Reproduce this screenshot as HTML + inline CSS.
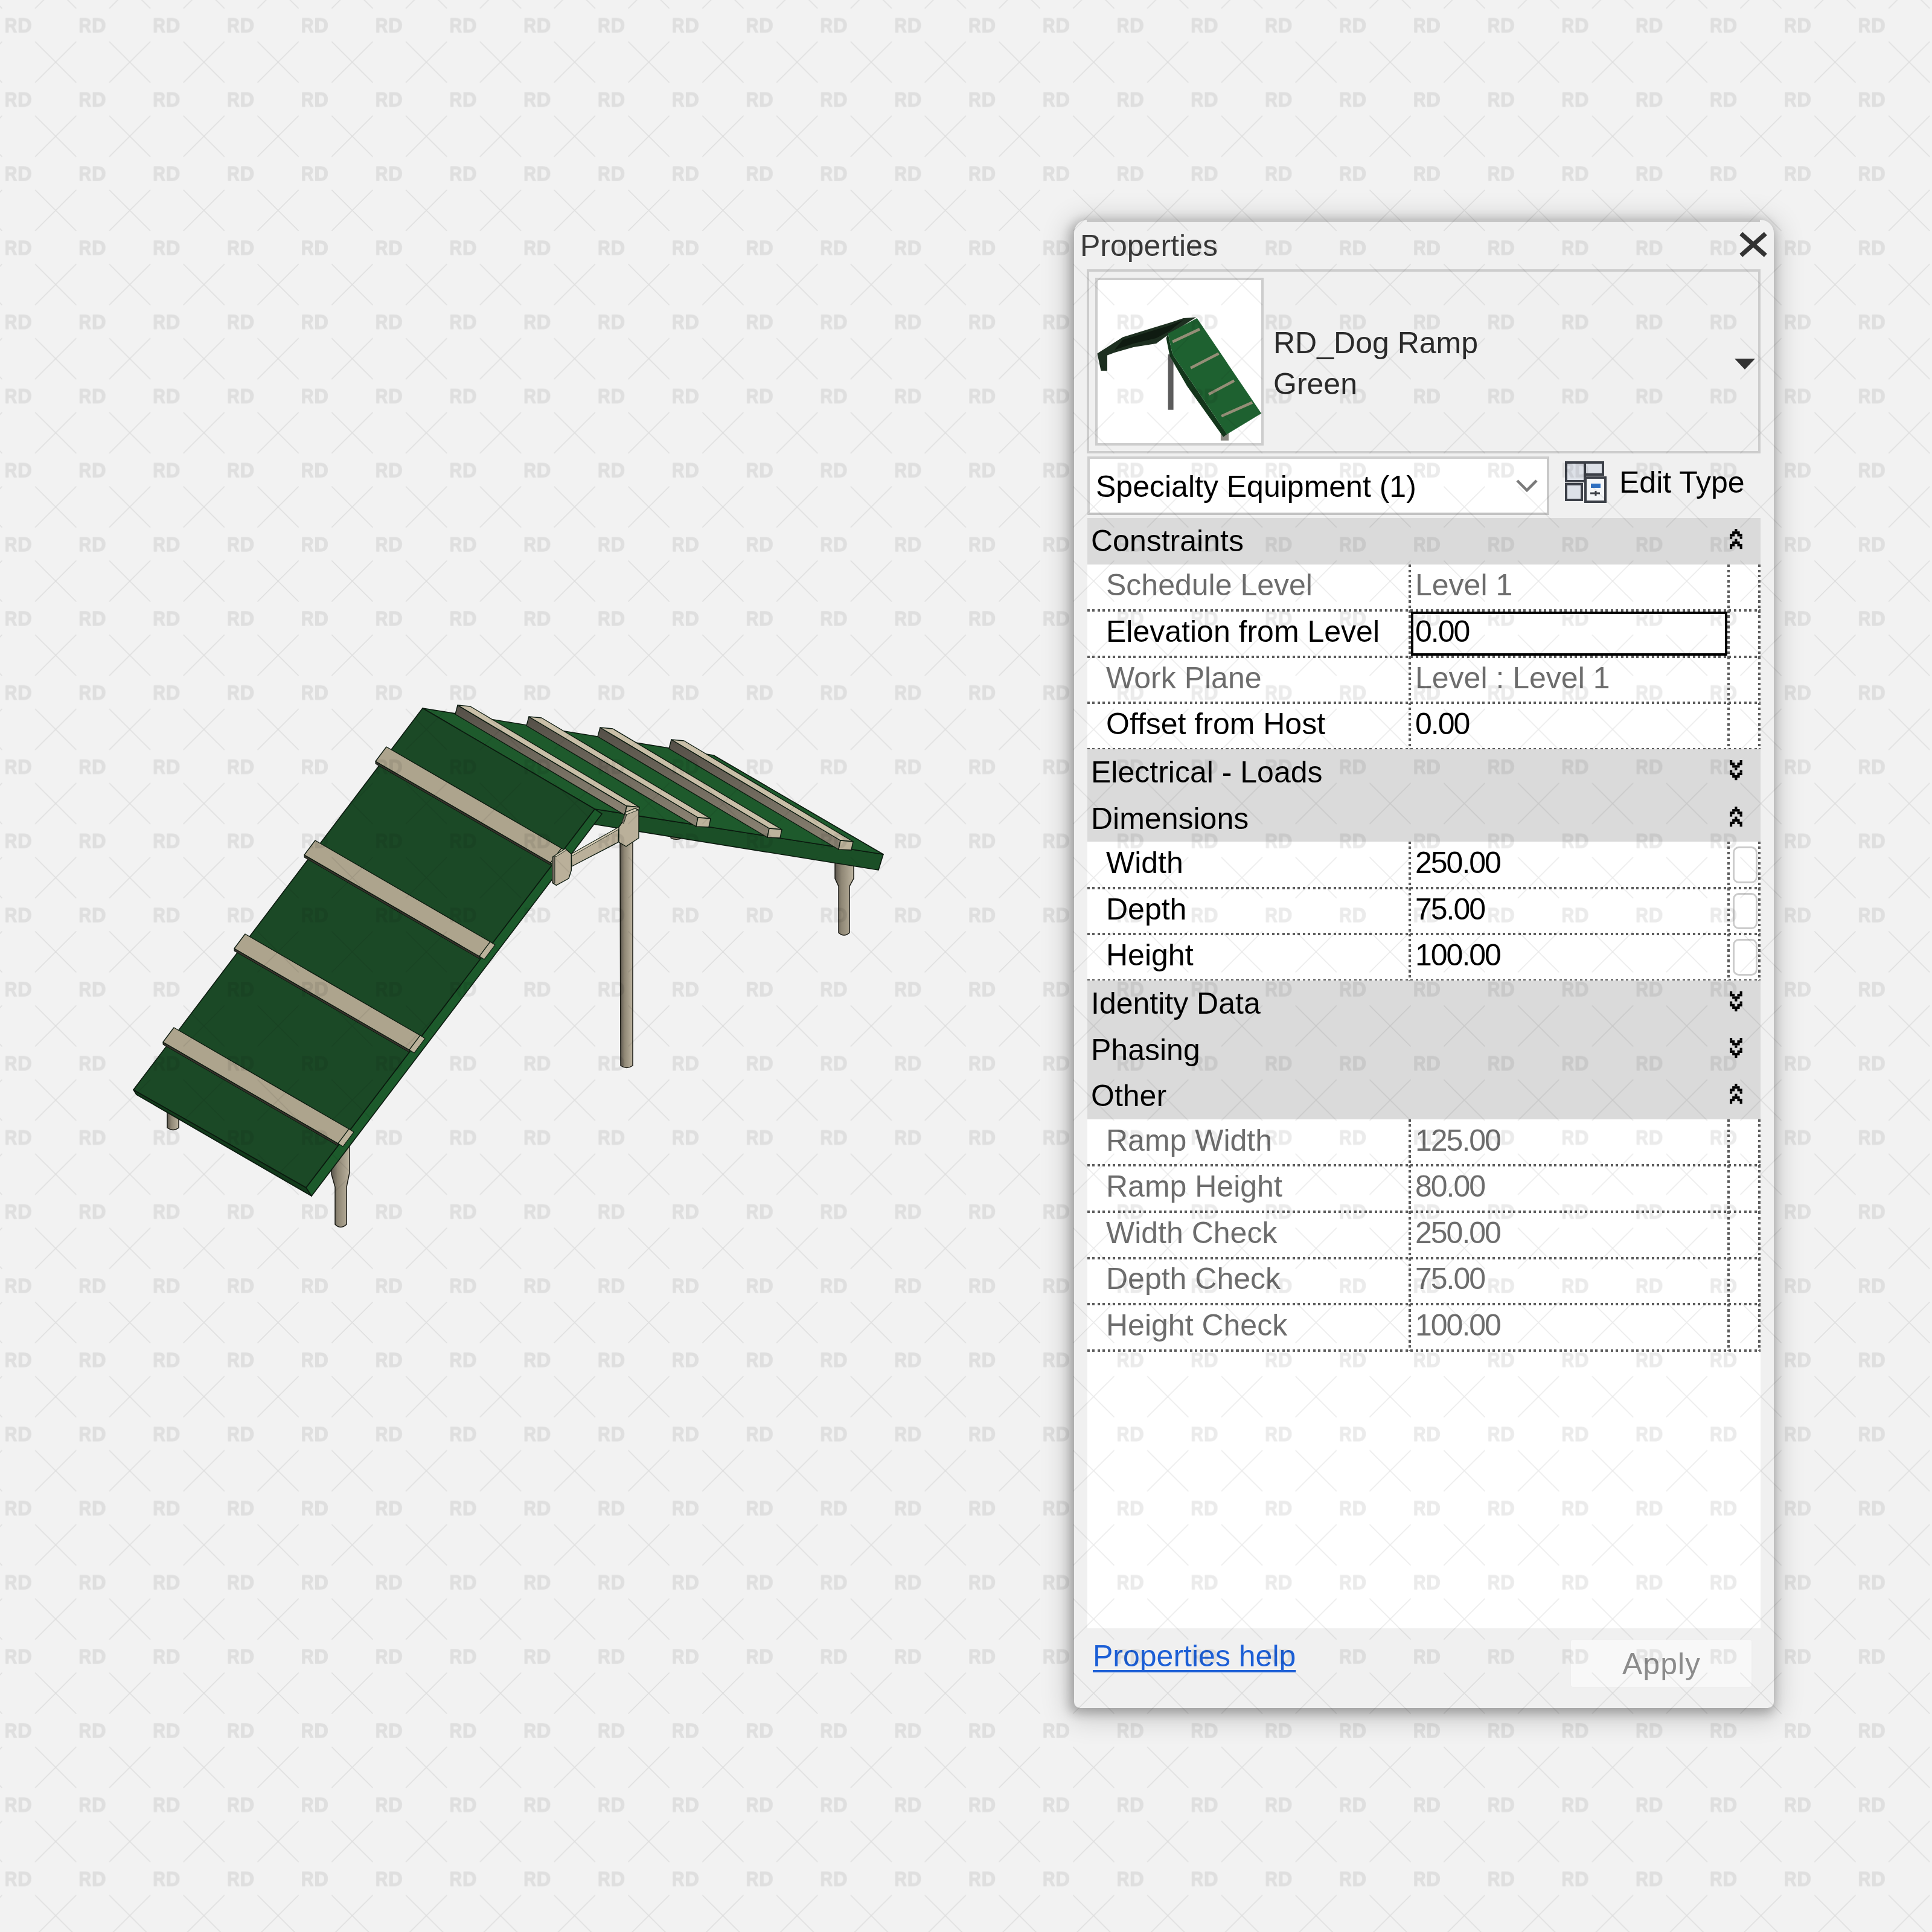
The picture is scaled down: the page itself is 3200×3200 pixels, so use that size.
<!DOCTYPE html>
<html><head><meta charset="utf-8">
<style>
html,body{margin:0;padding:0;}
body{width:3200px;height:3200px;position:relative;overflow:hidden;background:#f2f2f2;font-family:"Liberation Sans",sans-serif;}
.a{position:absolute;}
.t{position:absolute;white-space:nowrap;font-size:50px;line-height:50px;color:#000;}
.g{color:#6d6d6d;}
.hdr{position:absolute;left:1801px;width:1115px;background:#dadada;}
.hl{position:absolute;left:1801px;width:1115px;height:4px;background:repeating-linear-gradient(90deg,#5c5c5c 0 4px,transparent 4px 8.5px);}
.vl{position:absolute;width:4px;background:repeating-linear-gradient(180deg,#5c5c5c 0 4px,transparent 4px 8.5px);}
</style></head>
<body>
<svg class="a" style="left:0;top:0" width="3200" height="3200" viewBox="0 0 3200 3200">
<defs>
<linearGradient id="post" x1="0" x2="1" y1="0" y2="0"><stop offset="0" stop-color="#5a554c"/><stop offset="0.35" stop-color="#8f8775"/><stop offset="1" stop-color="#bcb39f"/></linearGradient>
<linearGradient id="sside" x1="0" x2="0" y1="0" y2="1"><stop offset="0" stop-color="#544f47"/><stop offset="1" stop-color="#8c8474"/></linearGradient>
</defs>
<path d="M1383 1425 L1414 1425 L1414 1455 L1407 1468 L1407 1545 Q1398 1553 1389 1545 L1389 1468 L1383 1455 Z" fill="url(#post)" stroke="#1a1a14" stroke-width="1.5"/>
<path d="M1111 1380 L1130 1380 L1130 1388 Q1120 1393 1111 1388 Z" fill="url(#post)" stroke="#1a1a14" stroke-width="1.2"/>
<path d="M1027 1392 L1048 1392 L1048 1765 Q1038 1772 1028 1765 Z" fill="url(#post)" stroke="#1a1a14" stroke-width="1.5"/>
<path d="M277 1830 L296 1830 L296 1868 Q287 1875 277 1868 Z" fill="url(#post)" stroke="#1a1a14" stroke-width="1.5"/>
<path d="M549 1890 L579 1890 L579 1942 L574 1966 L574 2028 Q564 2037 555 2028 L555 1966 L549 1945 Z" fill="url(#post)" stroke="#1a1a14" stroke-width="1.5"/>
<polygon points="985.0,1340.0 1463.0,1415.0 1455.0,1441.0 976.0,1364.0 994.0,1351.0" fill="#1b4f27" stroke="#0b1a0f" stroke-width="1.6" stroke-linejoin="round" />
<polygon points="700.0,1173.0 1182.0,1251.0 1463.0,1415.0 985.0,1340.0" fill="#1e5a2c" stroke="#0b1a0f" stroke-width="1.6" stroke-linejoin="round" />
<polygon points="758.0,1168.0 1038.0,1335.0 1035.0,1350.0 754.0,1183.0" fill="url(#sside)" stroke="#0b1a0f" stroke-width="1.4" stroke-linejoin="round" />
<polygon points="758.0,1168.0 779.0,1170.0 1059.0,1337.0 1038.0,1335.0" fill="#c9bfa8" stroke="#0b1a0f" stroke-width="1.4" stroke-linejoin="round" />
<polygon points="1038.0,1335.0 1059.0,1337.0 1056.0,1351.0 1035.0,1350.0" fill="#bdb39c" stroke="#0b1a0f" stroke-width="1.4" stroke-linejoin="round" />
<polygon points="876.0,1187.0 1156.0,1354.0 1153.0,1369.0 872.0,1202.0" fill="url(#sside)" stroke="#0b1a0f" stroke-width="1.4" stroke-linejoin="round" />
<polygon points="876.0,1187.0 897.0,1189.0 1177.0,1356.0 1156.0,1354.0" fill="#c9bfa8" stroke="#0b1a0f" stroke-width="1.4" stroke-linejoin="round" />
<polygon points="1156.0,1354.0 1177.0,1356.0 1174.0,1370.0 1153.0,1369.0" fill="#bdb39c" stroke="#0b1a0f" stroke-width="1.4" stroke-linejoin="round" />
<polygon points="994.0,1205.0 1274.0,1372.0 1271.0,1387.0 990.0,1220.0" fill="url(#sside)" stroke="#0b1a0f" stroke-width="1.4" stroke-linejoin="round" />
<polygon points="994.0,1205.0 1015.0,1207.0 1295.0,1374.0 1274.0,1372.0" fill="#c9bfa8" stroke="#0b1a0f" stroke-width="1.4" stroke-linejoin="round" />
<polygon points="1274.0,1372.0 1295.0,1374.0 1292.0,1388.0 1271.0,1387.0" fill="#bdb39c" stroke="#0b1a0f" stroke-width="1.4" stroke-linejoin="round" />
<polygon points="1112.0,1225.0 1392.0,1392.0 1389.0,1407.0 1108.0,1240.0" fill="url(#sside)" stroke="#0b1a0f" stroke-width="1.4" stroke-linejoin="round" />
<polygon points="1112.0,1225.0 1133.0,1227.0 1413.0,1394.0 1392.0,1392.0" fill="#c9bfa8" stroke="#0b1a0f" stroke-width="1.4" stroke-linejoin="round" />
<polygon points="1392.0,1392.0 1413.0,1394.0 1410.0,1408.0 1389.0,1407.0" fill="#bdb39c" stroke="#0b1a0f" stroke-width="1.4" stroke-linejoin="round" />
<polygon points="221.0,1805.0 507.0,1967.0 516.0,1981.0 226.0,1813.0" fill="#123a1b" stroke="#0b1a0f" stroke-width="1.6" stroke-linejoin="round" />
<polygon points="985.0,1340.0 997.0,1348.0 516.0,1981.0 507.0,1967.0" fill="#1c5a2b" stroke="#0b1a0f" stroke-width="1.6" stroke-linejoin="round" />
<polygon points="700.0,1173.0 985.0,1340.0 507.0,1967.0 221.0,1805.0" fill="#1b4926" stroke="#0b1a0f" stroke-width="1.6" stroke-linejoin="round" />
<polygon points="622.0,1261.0 912.0,1429.0 912.0,1433.0 622.0,1265.0" fill="#35312b" stroke="#0b1a0f" stroke-width="1.0" stroke-linejoin="round" />
<polygon points="640.0,1237.0 930.0,1405.0 912.0,1429.0 622.0,1261.0" fill="#ada48d" stroke="#0b1a0f" stroke-width="1.4" stroke-linejoin="round" />
<polygon points="930.0,1405.0 938.0,1410.0 920.0,1434.0 912.0,1429.0" fill="#bcb39c" stroke="#0b1a0f" stroke-width="1.2" stroke-linejoin="round" />
<polygon points="504.0,1416.0 794.0,1584.0 794.0,1588.0 504.0,1420.0" fill="#35312b" stroke="#0b1a0f" stroke-width="1.0" stroke-linejoin="round" />
<polygon points="522.0,1392.0 812.0,1560.0 794.0,1584.0 504.0,1416.0" fill="#ada48d" stroke="#0b1a0f" stroke-width="1.4" stroke-linejoin="round" />
<polygon points="812.0,1560.0 820.0,1565.0 802.0,1589.0 794.0,1584.0" fill="#bcb39c" stroke="#0b1a0f" stroke-width="1.2" stroke-linejoin="round" />
<polygon points="388.0,1571.0 678.0,1739.0 678.0,1743.0 388.0,1575.0" fill="#35312b" stroke="#0b1a0f" stroke-width="1.0" stroke-linejoin="round" />
<polygon points="406.0,1547.0 696.0,1715.0 678.0,1739.0 388.0,1571.0" fill="#ada48d" stroke="#0b1a0f" stroke-width="1.4" stroke-linejoin="round" />
<polygon points="696.0,1715.0 704.0,1720.0 686.0,1744.0 678.0,1739.0" fill="#bcb39c" stroke="#0b1a0f" stroke-width="1.2" stroke-linejoin="round" />
<polygon points="270.0,1726.0 560.0,1894.0 560.0,1898.0 270.0,1730.0" fill="#35312b" stroke="#0b1a0f" stroke-width="1.0" stroke-linejoin="round" />
<polygon points="288.0,1702.0 578.0,1870.0 560.0,1894.0 270.0,1726.0" fill="#ada48d" stroke="#0b1a0f" stroke-width="1.4" stroke-linejoin="round" />
<polygon points="578.0,1870.0 586.0,1875.0 568.0,1899.0 560.0,1894.0" fill="#bcb39c" stroke="#0b1a0f" stroke-width="1.2" stroke-linejoin="round" />
<polygon points="946.0,1414.6 1025.0,1370.0 1024.0,1395.0 947.0,1435.0" fill="#bab09a" stroke="#0b1a0f" stroke-width="1.4" stroke-linejoin="round" />
<polygon points="946.0,1414.6 1025.0,1370.0 1026.0,1373.0 947.0,1418.0" fill="#d6ccb6" stroke="#0b1a0f" stroke-width="0.8" stroke-linejoin="round" />
<polygon points="914.7,1419.8 936.4,1405.8 946.3,1414.6 946.3,1441.5 942.0,1455.0 921.4,1466.3 914.7,1462.2" fill="#bab09a" stroke="#0b1a0f" stroke-width="1.4" stroke-linejoin="round" />
<polygon points="914.7,1419.8 919.0,1417.0 919.0,1463.0 914.7,1462.2" fill="#6f695d" stroke="#0b1a0f" stroke-width="0.8" stroke-linejoin="round" />
<polygon points="919.0,1417.0 936.4,1405.8 938.0,1408.0 921.0,1419.0" fill="#d6ccb6" stroke="#0b1a0f" stroke-width="0.8" stroke-linejoin="round" />
<polygon points="1035.0,1346.0 1052.0,1339.0 1058.0,1342.0 1058.0,1388.0 1037.0,1402.0 1025.0,1395.0 1025.0,1370.0 1032.0,1360.0" fill="#bab09a" stroke="#0b1a0f" stroke-width="1.4" stroke-linejoin="round" />
<polygon points="1030.0,1362.0 1035.0,1348.0 1038.0,1349.0 1033.0,1364.0" fill="#6f695d" stroke="#0b1a0f" stroke-width="0.8" stroke-linejoin="round" />
<polygon points="1035.0,1346.0 1052.0,1339.0 1056.0,1342.0 1038.0,1349.0" fill="#d6ccb6" stroke="#0b1a0f" stroke-width="0.8" stroke-linejoin="round" />
</svg>
<div class="a" style="left:1779px;top:364px;width:1159px;height:2465px;background:#f0f0f0;border-radius:22px 22px 10px 10px;box-shadow:-3px 5px 16px 5px rgba(0,0,0,0.21),-2px 8px 46px 8px rgba(0,0,0,0.19);"></div>
<div class="a" style="left:1800px;top:364px;width:1115px;height:4px;background:#c6c6c6;"></div>
<div class="t " style="left:1789px;top:381.7px;color:#3a3a3a;">Properties</div>
<svg class="a" style="left:2878px;top:381px" width="52" height="48"><path d="M8.5 8.5 L43.5 39.5 M43.5 8.5 L8.5 39.5" stroke="#333" stroke-width="7.5" stroke-linecap="square"/></svg>
<div class="a" style="left:1800px;top:446px;width:1116px;height:305px;background:transparent;box-sizing:border-box;border:4px solid #cdcdcd;"></div>
<div class="a" style="left:1814px;top:460px;width:279px;height:278px;background:#fff;box-sizing:border-box;border:4px solid #cdcdcd;"></div>
<svg class="a" style="left:0;top:0" width="2100" height="760" viewBox="0 0 2100 760">
<polygon points="1817.5,585.6 1859.5,558.6 1903.1,545.1 1937.6,534.6 1960.1,527.1 1981.1,525.5 1960.1,539.1 1937.6,552.6 1915.1,569.1 1877.5,575.1 1846.0,584.1 1834.0,588.6 1834.0,614.1 1823.5,614.1 1819.0,593.1" fill="#1d2f20"/>
<polygon points="1859.5,563.1 1903.1,549.6 1937.6,539.1 1960.1,530.1 1937.6,548.1 1915.1,560.1 1877.5,569.1 1846.0,579.6" fill="#0f1b11"/>
<polygon points="1934.6,587.1 1943.6,587.1 1943.6,678.7 1934.6,678.7" fill="#5c5c5c"/>
<polygon points="2021.9,699.7 2035.0,699.7 2035.0,729.7 2021.9,729.7" fill="#8d8b84"/>
<polygon points="1934.6,552.6 1942.1,587.1 1975.1,635.1 2032.2,719.2 2026.2,723.7 1966.1,639.6 1937.6,590.1 1931.6,560.1" fill="#13361b"/>
<polygon points="1934.6,552.6 1982.6,527.1 2089.2,684.7 2032.2,719.2 1975.1,635.1 1942.1,587.1" fill="#1e6130"/>
<g stroke="#958e77" stroke-width="4.5">
<line x1="1942.1" y1="566.1" x2="1987.1" y2="545.1"/>
<line x1="1972.1" y1="609.6" x2="2018.6" y2="585.6"/>
<line x1="2002.1" y1="653.1" x2="2044.2" y2="630.6"/>
<line x1="2023.1" y1="689.2" x2="2074.2" y2="666.6"/>
</g></svg>
<div class="t " style="left:2109px;top:542.7px;color:#2a2a2a;">RD_Dog Ramp</div>
<div class="t " style="left:2109px;top:610.7px;color:#2a2a2a;">Green</div>
<svg class="a" style="left:2870px;top:592px" width="40" height="22"><path d="M3 2 L37 2 L20 20 Z" fill="#333"/></svg>
<div class="a" style="left:1801px;top:756px;width:765px;height:97px;background:#fff;box-sizing:border-box;border:4px solid #cfcfcf;border-bottom-color:#c2c2c2;border-right-color:#c8c8c8;"></div>
<div class="t " style="left:1815px;top:780.7px;">Specialty Equipment (1)</div>
<svg class="a" style="left:2508px;top:790px" width="42" height="30"><path d="M5 6 L21 22 L37 6" stroke="#7a7a7a" stroke-width="4.5" fill="none"/></svg>
<svg class="a" style="left:2592px;top:764px" width="70" height="70">
<rect x="2" y="2" width="31" height="31" fill="#dde1e8" stroke="#3c4048" stroke-width="4"/>
<rect x="33" y="2" width="30" height="20" fill="#dde1e8" stroke="#3c4048" stroke-width="4"/>
<rect x="2" y="38" width="26" height="26" fill="#dde1e8" stroke="#3c4048" stroke-width="4"/>
<rect x="34" y="27" width="33" height="40" fill="#f4f6f8" stroke="#3c4048" stroke-width="4"/>
<rect x="43" y="37" width="16" height="7" fill="#2f6fc0"/>
<path d="M42 53 H58 M51 49 V57" stroke="#3c4048" stroke-width="3"/>
</svg>
<div class="t " style="left:2682px;top:773.7px;">Edit Type</div>
<div class="a" style="left:1801px;top:858.0px;width:1115px;height:1839.0px;background:#fff;"></div>
<div class="a" style="left:1801px;top:858.0px;width:1115px;height:76.60000000000002px;background:#dadada;"></div>
<div class="t " style="left:1807px;top:871.2px;">Constraints</div>
<svg class="a" style="left:2865px;top:876.2px" width="22" height="34"><g fill="#000"><rect x="8.30" y="0.00" width="4.15" height="4.15"/><rect x="4.15" y="4.15" width="12.45" height="4.15"/><rect x="0.00" y="8.30" width="8.30" height="4.15"/><rect x="12.45" y="8.30" width="8.30" height="4.15"/><rect x="0.00" y="12.45" width="4.15" height="4.15"/><rect x="16.60" y="12.45" width="4.15" height="4.15"/><rect x="8.30" y="16.60" width="4.15" height="4.15"/><rect x="4.15" y="20.75" width="12.45" height="4.15"/><rect x="0.00" y="24.90" width="8.30" height="4.15"/><rect x="12.45" y="24.90" width="8.30" height="4.15"/><rect x="0.00" y="29.05" width="4.15" height="4.15"/><rect x="16.60" y="29.05" width="4.15" height="4.15"/></g></svg>
<div class="t g" style="left:1832px;top:944.3px;">Schedule Level</div>
<div class="t g" style="left:2344px;top:944.3px;">Level 1</div>
<div class="hl" style="top:1009.2px"></div>
<div class="vl" style="left:2333px;top:934.6px;height:76.6px"></div>
<div class="vl" style="left:2861px;top:934.6px;height:76.6px"></div>
<div class="vl" style="left:2912px;top:934.6px;height:76.6px"></div>
<div class="t " style="left:1832px;top:1020.9px;">Elevation from Level</div>
<div class="t " style="left:2344px;top:1020.9px;letter-spacing:-2px;">0.00</div>
<div class="hl" style="top:1085.8px"></div>
<div class="vl" style="left:2333px;top:1011.2px;height:76.6px"></div>
<div class="vl" style="left:2861px;top:1011.2px;height:76.6px"></div>
<div class="vl" style="left:2912px;top:1011.2px;height:76.6px"></div>
<div class="a" style="left:2337px;top:1013.2px;width:524px;height:72.59999999999991px;background:transparent;box-sizing:border-box;border:4.5px solid #000;"></div>
<div class="t g" style="left:1832px;top:1097.5px;">Work Plane</div>
<div class="t g" style="left:2344px;top:1097.5px;">Level : Level 1</div>
<div class="hl" style="top:1162.4px"></div>
<div class="vl" style="left:2333px;top:1087.8px;height:76.6px"></div>
<div class="vl" style="left:2861px;top:1087.8px;height:76.6px"></div>
<div class="vl" style="left:2912px;top:1087.8px;height:76.6px"></div>
<div class="t " style="left:1832px;top:1174.1px;">Offset from Host</div>
<div class="t " style="left:2344px;top:1174.1px;letter-spacing:-2px;">0.00</div>
<div class="hl" style="top:1239.0px"></div>
<div class="vl" style="left:2333px;top:1164.4px;height:76.6px"></div>
<div class="vl" style="left:2861px;top:1164.4px;height:76.6px"></div>
<div class="vl" style="left:2912px;top:1164.4px;height:76.6px"></div>
<div class="a" style="left:1801px;top:1241.0px;width:1115px;height:76.59999999999991px;background:#dadada;"></div>
<div class="t " style="left:1807px;top:1254.2px;">Electrical - Loads</div>
<svg class="a" style="left:2865px;top:1259.2px" width="22" height="34"><g fill="#000"><rect x="8.30" y="12.45" width="4.15" height="4.15"/><rect x="4.15" y="8.30" width="12.45" height="4.15"/><rect x="0.00" y="4.15" width="8.30" height="4.15"/><rect x="12.45" y="4.15" width="8.30" height="4.15"/><rect x="0.00" y="0.00" width="4.15" height="4.15"/><rect x="16.60" y="0.00" width="4.15" height="4.15"/><rect x="8.30" y="29.05" width="4.15" height="4.15"/><rect x="4.15" y="24.90" width="12.45" height="4.15"/><rect x="0.00" y="20.75" width="8.30" height="4.15"/><rect x="12.45" y="20.75" width="8.30" height="4.15"/><rect x="0.00" y="16.60" width="4.15" height="4.15"/><rect x="16.60" y="16.60" width="4.15" height="4.15"/></g></svg>
<div class="a" style="left:1801px;top:1317.6px;width:1115px;height:76.60000000000014px;background:#dadada;"></div>
<div class="t " style="left:1807px;top:1330.8px;">Dimensions</div>
<svg class="a" style="left:2865px;top:1335.8px" width="22" height="34"><g fill="#000"><rect x="8.30" y="0.00" width="4.15" height="4.15"/><rect x="4.15" y="4.15" width="12.45" height="4.15"/><rect x="0.00" y="8.30" width="8.30" height="4.15"/><rect x="12.45" y="8.30" width="8.30" height="4.15"/><rect x="0.00" y="12.45" width="4.15" height="4.15"/><rect x="16.60" y="12.45" width="4.15" height="4.15"/><rect x="8.30" y="16.60" width="4.15" height="4.15"/><rect x="4.15" y="20.75" width="12.45" height="4.15"/><rect x="0.00" y="24.90" width="8.30" height="4.15"/><rect x="12.45" y="24.90" width="8.30" height="4.15"/><rect x="0.00" y="29.05" width="4.15" height="4.15"/><rect x="16.60" y="29.05" width="4.15" height="4.15"/></g></svg>
<div class="t " style="left:1832px;top:1403.9px;">Width</div>
<div class="t " style="left:2344px;top:1403.9px;letter-spacing:-2px;">250.00</div>
<div class="hl" style="top:1468.8px"></div>
<div class="vl" style="left:2333px;top:1394.2px;height:76.6px"></div>
<div class="vl" style="left:2861px;top:1394.2px;height:76.6px"></div>
<div class="vl" style="left:2912px;top:1394.2px;height:76.6px"></div>
<div class="a" style="left:2870px;top:1402.2px;width:41px;height:60.59999999999991px;background:transparent;box-sizing:border-box;border:3px solid #cbcbcb;border-radius:10px;"></div>
<div class="t " style="left:1832px;top:1480.5px;">Depth</div>
<div class="t " style="left:2344px;top:1480.5px;letter-spacing:-2px;">75.00</div>
<div class="hl" style="top:1545.4px"></div>
<div class="vl" style="left:2333px;top:1470.8px;height:76.6px"></div>
<div class="vl" style="left:2861px;top:1470.8px;height:76.6px"></div>
<div class="vl" style="left:2912px;top:1470.8px;height:76.6px"></div>
<div class="a" style="left:2870px;top:1478.8px;width:41px;height:60.600000000000136px;background:transparent;box-sizing:border-box;border:3px solid #cbcbcb;border-radius:10px;"></div>
<div class="t " style="left:1832px;top:1557.1px;">Height</div>
<div class="t " style="left:2344px;top:1557.1px;letter-spacing:-2px;">100.00</div>
<div class="hl" style="top:1622.0px"></div>
<div class="vl" style="left:2333px;top:1547.4px;height:76.6px"></div>
<div class="vl" style="left:2861px;top:1547.4px;height:76.6px"></div>
<div class="vl" style="left:2912px;top:1547.4px;height:76.6px"></div>
<div class="a" style="left:2870px;top:1555.4px;width:41px;height:60.59999999999991px;background:transparent;box-sizing:border-box;border:3px solid #cbcbcb;border-radius:10px;"></div>
<div class="a" style="left:1801px;top:1624.0px;width:1115px;height:76.59999999999991px;background:#dadada;"></div>
<div class="t " style="left:1807px;top:1637.2px;">Identity Data</div>
<svg class="a" style="left:2865px;top:1642.2px" width="22" height="34"><g fill="#000"><rect x="8.30" y="12.45" width="4.15" height="4.15"/><rect x="4.15" y="8.30" width="12.45" height="4.15"/><rect x="0.00" y="4.15" width="8.30" height="4.15"/><rect x="12.45" y="4.15" width="8.30" height="4.15"/><rect x="0.00" y="0.00" width="4.15" height="4.15"/><rect x="16.60" y="0.00" width="4.15" height="4.15"/><rect x="8.30" y="29.05" width="4.15" height="4.15"/><rect x="4.15" y="24.90" width="12.45" height="4.15"/><rect x="0.00" y="20.75" width="8.30" height="4.15"/><rect x="12.45" y="20.75" width="8.30" height="4.15"/><rect x="0.00" y="16.60" width="4.15" height="4.15"/><rect x="16.60" y="16.60" width="4.15" height="4.15"/></g></svg>
<div class="a" style="left:1801px;top:1700.6px;width:1115px;height:76.60000000000014px;background:#dadada;"></div>
<div class="t " style="left:1807px;top:1713.8px;">Phasing</div>
<svg class="a" style="left:2865px;top:1718.8px" width="22" height="34"><g fill="#000"><rect x="8.30" y="12.45" width="4.15" height="4.15"/><rect x="4.15" y="8.30" width="12.45" height="4.15"/><rect x="0.00" y="4.15" width="8.30" height="4.15"/><rect x="12.45" y="4.15" width="8.30" height="4.15"/><rect x="0.00" y="0.00" width="4.15" height="4.15"/><rect x="16.60" y="0.00" width="4.15" height="4.15"/><rect x="8.30" y="29.05" width="4.15" height="4.15"/><rect x="4.15" y="24.90" width="12.45" height="4.15"/><rect x="0.00" y="20.75" width="8.30" height="4.15"/><rect x="12.45" y="20.75" width="8.30" height="4.15"/><rect x="0.00" y="16.60" width="4.15" height="4.15"/><rect x="16.60" y="16.60" width="4.15" height="4.15"/></g></svg>
<div class="a" style="left:1801px;top:1777.2px;width:1115px;height:76.59999999999991px;background:#dadada;"></div>
<div class="t " style="left:1807px;top:1790.4px;">Other</div>
<svg class="a" style="left:2865px;top:1795.4px" width="22" height="34"><g fill="#000"><rect x="8.30" y="0.00" width="4.15" height="4.15"/><rect x="4.15" y="4.15" width="12.45" height="4.15"/><rect x="0.00" y="8.30" width="8.30" height="4.15"/><rect x="12.45" y="8.30" width="8.30" height="4.15"/><rect x="0.00" y="12.45" width="4.15" height="4.15"/><rect x="16.60" y="12.45" width="4.15" height="4.15"/><rect x="8.30" y="16.60" width="4.15" height="4.15"/><rect x="4.15" y="20.75" width="12.45" height="4.15"/><rect x="0.00" y="24.90" width="8.30" height="4.15"/><rect x="12.45" y="24.90" width="8.30" height="4.15"/><rect x="0.00" y="29.05" width="4.15" height="4.15"/><rect x="16.60" y="29.05" width="4.15" height="4.15"/></g></svg>
<div class="t g" style="left:1832px;top:1863.5px;">Ramp Width</div>
<div class="t g" style="left:2344px;top:1863.5px;letter-spacing:-2px;">125.00</div>
<div class="hl" style="top:1928.4px"></div>
<div class="vl" style="left:2333px;top:1853.8px;height:76.6px"></div>
<div class="vl" style="left:2861px;top:1853.8px;height:76.6px"></div>
<div class="vl" style="left:2912px;top:1853.8px;height:76.6px"></div>
<div class="t g" style="left:1832px;top:1940.1px;">Ramp Height</div>
<div class="t g" style="left:2344px;top:1940.1px;letter-spacing:-2px;">80.00</div>
<div class="hl" style="top:2005.0px"></div>
<div class="vl" style="left:2333px;top:1930.4px;height:76.6px"></div>
<div class="vl" style="left:2861px;top:1930.4px;height:76.6px"></div>
<div class="vl" style="left:2912px;top:1930.4px;height:76.6px"></div>
<div class="t g" style="left:1832px;top:2016.7px;">Width Check</div>
<div class="t g" style="left:2344px;top:2016.7px;letter-spacing:-2px;">250.00</div>
<div class="hl" style="top:2081.6px"></div>
<div class="vl" style="left:2333px;top:2007.0px;height:76.6px"></div>
<div class="vl" style="left:2861px;top:2007.0px;height:76.6px"></div>
<div class="vl" style="left:2912px;top:2007.0px;height:76.6px"></div>
<div class="t g" style="left:1832px;top:2093.3px;">Depth Check</div>
<div class="t g" style="left:2344px;top:2093.3px;letter-spacing:-2px;">75.00</div>
<div class="hl" style="top:2158.2px"></div>
<div class="vl" style="left:2333px;top:2083.6px;height:76.6px"></div>
<div class="vl" style="left:2861px;top:2083.6px;height:76.6px"></div>
<div class="vl" style="left:2912px;top:2083.6px;height:76.6px"></div>
<div class="t g" style="left:1832px;top:2169.9px;">Height Check</div>
<div class="t g" style="left:2344px;top:2169.9px;letter-spacing:-2px;">100.00</div>
<div class="hl" style="top:2234.8px"></div>
<div class="vl" style="left:2333px;top:2160.2px;height:76.6px"></div>
<div class="vl" style="left:2861px;top:2160.2px;height:76.6px"></div>
<div class="vl" style="left:2912px;top:2160.2px;height:76.6px"></div>
<div class="t " style="left:1810px;top:2717.7px;color:#1c5fd6;text-decoration:underline;text-decoration-thickness:3.5px;text-underline-offset:6px;text-decoration-skip-ink:none;">Properties help</div>
<div class="a" style="left:2600px;top:2714px;width:303px;height:82px;background:#f8f8f8;box-sizing:border-box;border:2px solid #efefef;border-radius:6px;"></div>
<div class="t " style="left:2687px;top:2730.7px;color:#8c8c8c;letter-spacing:1px;">Apply</div>
<svg class="a" style="left:0;top:0;pointer-events:none" width="3200" height="3200" viewBox="0 0 3200 3200">
<defs>
<pattern id="pt" patternUnits="userSpaceOnUse" x="30.8" y="41.5" width="122.8" height="122.8">
<g opacity="0.078"><g fill="#000" stroke="#000" stroke-width="1.4" stroke-linejoin="round" font-family="Liberation Sans" font-weight="bold" font-size="33.3">
<text transform="translate(-22.9,12.0) scale(0.85,1)">R</text><text transform="translate(-1.6,12.0) scale(0.97,1)">D</text>
<text transform="translate(99.9,12.0) scale(0.85,1)">R</text><text transform="translate(121.2,12.0) scale(0.97,1)">D</text>
<text transform="translate(-22.9,134.8) scale(0.85,1)">R</text><text transform="translate(-1.6,134.8) scale(0.97,1)">D</text>
<text transform="translate(99.9,134.8) scale(0.85,1)">R</text><text transform="translate(121.2,134.8) scale(0.97,1)">D</text>
</g></g>
<path d="M27.4 27.4 L95.4 95.4 M95.4 27.4 L27.4 95.4" stroke="#000" stroke-opacity="0.085" stroke-width="1.5"/>
</pattern>
</defs>
<rect x="0" y="0" width="3200" height="3200" fill="url(#pt)"/>
</svg>
</body></html>
